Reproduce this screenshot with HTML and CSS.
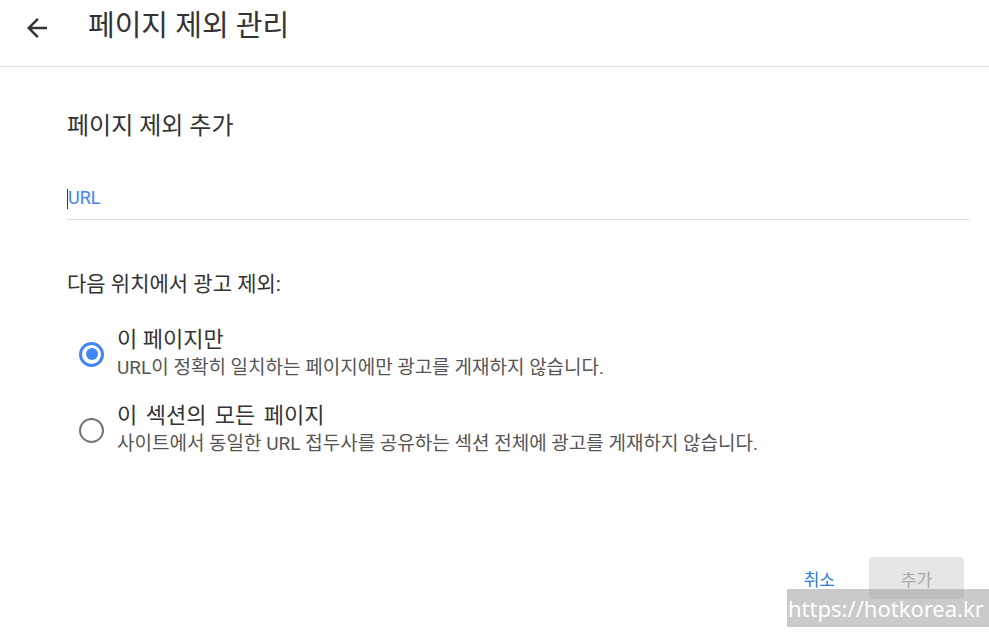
FILE: index.html
```html
<!DOCTYPE html>
<html lang="ko">
<head>
    <meta charset="UTF-8">
    <meta name="viewport" content="width=device-width, initial-scale=1.0">
    <title>페이지 제외 관리</title>
    <link rel="stylesheet" href="styles.css">
</head>
<body>
    <div class="header">
        <button class="back" aria-label="뒤로">
            <svg width="30" height="30" viewBox="0 0 24 24"><path d="M20 11H7.83l5.59-5.59L12 4l-8 8 8 8 1.41-1.41L7.83 13H20v-2z" fill="#333"/></svg>
        </button>
        <h1>페이지 제외 관리</h1>
    </div>

    <div class="content">
        <h2>페이지 제외 추가</h2>

        <div class="field">
            <span class="caret"></span><span class="placeholder">URL</span>
        </div>

        <p class="label">다음 위치에서 광고 제외:</p>

        <div class="options">
            <div class="option">
                <span class="radio checked"></span>
                <div class="option-text">
                    <div class="option-title">이 페이지만</div>
                    <div class="option-desc">URL이 정확히 일치하는 페이지에만 광고를 게재하지 않습니다.</div>
                </div>
            </div>
            <div class="option">
                <span class="radio"></span>
                <div class="option-text">
                    <div class="option-title wide">이 섹션의 모든 페이지</div>
                    <div class="option-desc">사이트에서 동일한 URL 접두사를 공유하는 섹션 전체에 광고를 게재하지 않습니다.</div>
                </div>
            </div>
        </div>
    </div>

    <div class="actions">
        <button class="cancel">취소</button>
        <button class="add" disabled>추가</button>
    </div>

    <div class="watermark">https://hotkorea.kr</div>
</body>
</html>
```

FILE: styles.css
```css
body {
    font-family: Roboto, "Noto Sans CJK KR", sans-serif;
    margin: 0;
    background: #fff;
    color: #333;
    height: 632px;
    overflow: hidden;
    position: relative;
}
.header {
    display: flex;
    align-items: center;
    height: 67px;
    border-bottom: 1px solid #e0e0e0;
    box-sizing: border-box;
    padding: 0 0 14px 22px;
}
.back {
    border: none;
    background: none;
    padding: 0;
    width: 30px;
    height: 30px;
    display: flex;
    align-items: center;
    justify-content: center;
    cursor: pointer;
    margin-top: 3px;
}
h1 {
    margin: 0 0 0 36px;
    font-size: 29px;
    font-weight: 400;
    color: #333;
    line-height: 36px;
}
.content {
    padding: 0 20px 0 67px;
}
h2 {
    margin: 44px 0 0;
    font-size: 24px;
    font-weight: 400;
    line-height: 30px;
    color: #333;
}
.field {
    margin-top: 46px;
    border-bottom: 1px solid #ddd;
    height: 32px;
    display: flex;
    align-items: flex-start;
}
.caret {
    width: 1px;
    height: 20px;
    background: #333;
    margin-top: 2px;
}
.placeholder {
    color: #4285f4;
    font-size: 18px;
    line-height: 22px;
}
.label {
    margin: 51px 0 0;
    font-size: 21px;
    line-height: 26px;
    color: #333;
}
.options {
    margin-top: 28px;
    display: flex;
    flex-direction: column;
    gap: 20px;
}
.option {
    display: flex;
    align-items: center;
    margin-left: 12px;
}
.radio {
    width: 25px;
    height: 25px;
    border: 2.5px solid #757575;
    border-radius: 50%;
    box-sizing: border-box;
    position: relative;
    flex-shrink: 0;
    margin-top: 2px;
}
.radio.checked {
    border-color: #4285f4;
    border-width: 3px;
}
.radio.checked::after {
    content: "";
    position: absolute;
    left: 3.5px;
    top: 3.5px;
    width: 12px;
    height: 12px;
    border-radius: 50%;
    background: #4285f4;
}
.option-text {
    margin-left: 13px;
}
.option-title {
    font-size: 22px;
    line-height: 29px;
    color: #333;
}
.option-title.wide {
    word-spacing: 3px;
}
.option-desc {
    font-size: 19px;
    line-height: 27px;
    color: #555;
}
.actions {
    position: absolute;
    right: 25px;
    top: 557px;
    display: flex;
    align-items: center;
    gap: 14px;
}
.actions button {
    font-family: Roboto, "Noto Sans CJK KR", sans-serif;
    font-size: 17px;
    border: none;
    border-radius: 4px;
    height: 42px;
    padding: 0 20px;
    cursor: pointer;
}
.cancel {
    background: none;
    color: #2a7ae2;
}
.add {
    background: #e5e6e6;
    color: #a8a8a8;
    width: 95px;
}
.watermark {
    position: absolute;
    left: 787px;
    top: 589px;
    width: 202px;
    height: 38px;
    box-sizing: border-box;
    padding-left: 1px;
    background: rgba(150, 150, 150, 0.5);
    color: #fff;
    font-family: "Noto Sans", sans-serif;
    font-size: 22px;
    line-height: 38px;
    white-space: nowrap;
}
```
